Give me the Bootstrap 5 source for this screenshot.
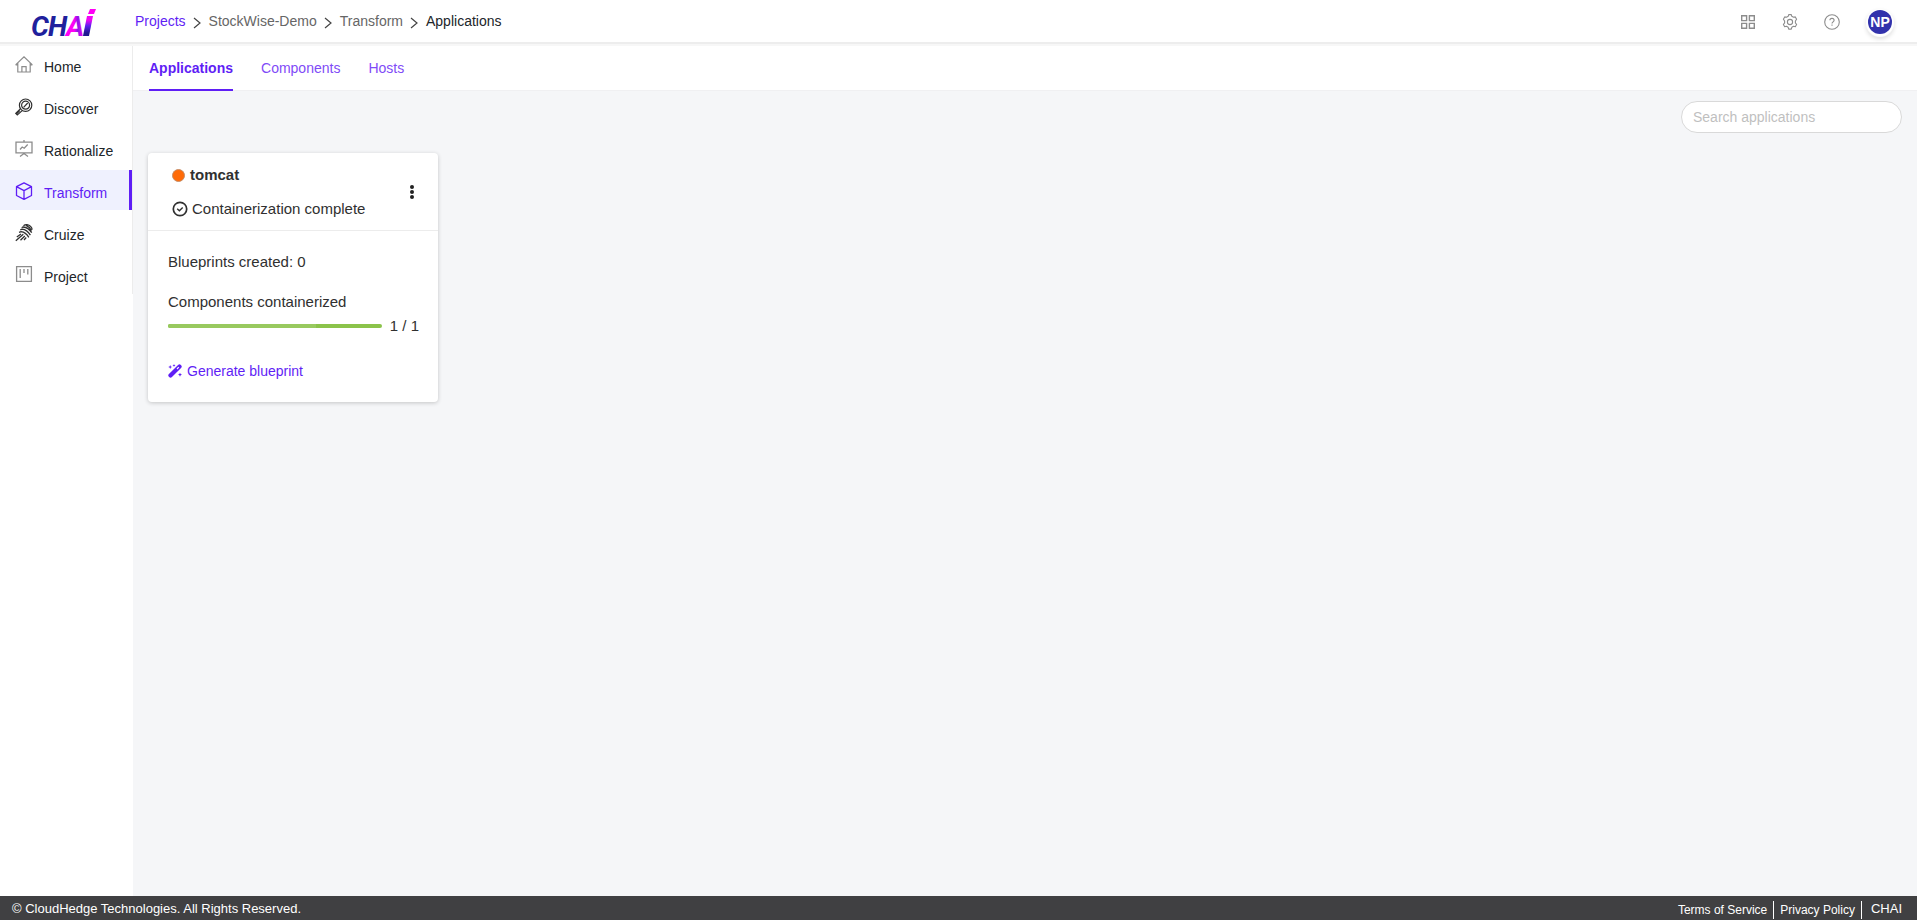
<!DOCTYPE html>
<html lang="en">
<head>
<meta charset="utf-8">
<meta name="viewport" content="width=device-width, initial-scale=1">
<title>CHAI - Applications</title>
<link rel="stylesheet" href="https://cdn.jsdelivr.net/npm/bootstrap@5.3.0/dist/css/bootstrap.min.css">
<style>
  :root { --brand: #5f1ef5; --ink: #212529; --canvas: #f5f6f8; }
  body { font-family: "Liberation Sans", Arial, sans-serif; font-size: 14px; line-height: 20px; color: var(--ink); background: #fff; }
  a { text-decoration: none; }
  svg { display: block; flex: none; }
  .topbar { height: 44px; padding-top: 2px; border-bottom: 2px solid #ededed; box-shadow: 0 2px 0 #f7f7f7; position: relative; z-index: 1; }
  .brand-area { width: 135px; padding-left: 30px; }
  .crumbs { gap: 6px; padding-bottom: 2px; font-size: 14px; }
  .crumbs a { color: #666; }
  .crumbs a.crumb-root { color: var(--brand); }
  .crumbs svg { margin-top: 4px; }
  .tool-btn { width: 42px; height: 40px; padding: 0; border: 0; background: none; color: #8c8c8c; }
  .topbar-tools { padding-right: 25px; }
  .avatar { width: 24px; height: 24px; border-radius: 50%; background: #3232ac; color: #fff; font-weight: 700; font-size: 14px; line-height: 24px; border: 0; padding: 0; margin-left: 15px; box-shadow: 0 1px 1px 2px #fff, 0 3px 4px 2px #ddd; }
  .side { width: 133px; flex: none; }
  .side-nav { border-right: 1px solid #ececec; gap: 2px; }
  .side-nav a { height: 40px; padding: 2px 0 0 15px; gap: 11px; color: var(--ink); border-right: 3px solid transparent; }
  .side-nav a span { padding-top: 4px; }
  .side-nav svg { color: #8c8c8c; }
  .side-nav svg.dark-icon { color: #303030; }
  .side-nav a.current { background: #eff1fe; color: var(--brand); border-right-color: var(--brand); }
  .side-nav a.current svg { color: var(--brand); }
  .workspace { background: var(--canvas); min-width: 0; }
  .tabs { height: 47px; padding-left: 16px; gap: 28px; background: #fff; border-bottom: 1px solid #f0f0f2; }
  .tabs a { color: #7f4bf7; padding-top: 14px; height: 47px; }
  .tabs a.current { color: var(--brand); font-weight: 700; border-bottom: 2px solid var(--brand); }
  .search-row { padding: 10px 15px 20px; }
  .search { width: 221px; height: 32px; font-size: 14px; border: 1px solid #d9d9d9; border-radius: 16px; padding: 0 11px; background: #fff; }
  .search::placeholder { color: #bfbfbf; opacity: 1; }
  .app-card { width: 290px; margin-left: 15px; border: 0; border-radius: 4px; box-shadow: 0 1px 4px rgba(0,0,0,.2); color: #303030; font-size: 15px; }
  .app-head { height: 78px; padding: 0 20px 0 24px; border-bottom: 1px solid #ececec; }
  .app-title { font-size: 15px; line-height: 20px; font-weight: 700; gap: 5px; margin-bottom: 14px; }
  .app-body { padding: 21px 19px 21px 20px; }
  .dot { width: 13px; height: 13px; border-radius: 50%; background: #ff6b08; border: 1px solid #c78d66; margin-top: 2px; }
  .meter { height: 4px; border-radius: 2px; background: #8bc34a; }
  .meter .progress-bar { background: #98c95f; }
  .menu-btn { border: 0; background: none; padding: 0; color: #222; }
  .generate { border: 0; background: none; padding: 0; margin-top: 25px; gap: 5px; color: var(--brand); font-size: 14px; }
  .page-foot { height: 24px; padding: 1px 15px 0 12px; background: #404042; color: #fff; font-size: 13px; line-height: 18px; }
  .page-foot a { color: #fff; font-size: 12px; padding: 0 6px; border-right: 1px solid #fff; margin-top: 2px; }
  .foot-brand { margin-left: 9px; }
</style>
</head>
<body class="d-flex flex-column min-vh-100">
<header class="topbar d-flex align-items-center bg-white">
  <a class="brand-area" href="#" aria-label="CHAI">
    <svg width="70" height="40" viewBox="0 0 70 40" font-family="Roboto, Liberation Sans, sans-serif" font-weight="700" font-style="italic" font-size="28">
      <defs>
        <linearGradient id="ga" x1="0" y1="0" x2="1" y2="0"><stop offset=".5" stop-color="#ff00f5"/><stop offset=".68" stop-color="#8a16e8"/><stop offset=".9" stop-color="#e808f2"/></linearGradient>
        <linearGradient id="gi" x1="0" y1="0" x2="0" y2="1"><stop offset=".2" stop-color="#f006f4"/><stop offset=".5" stop-color="#5a20ee"/><stop offset=".85" stop-color="#201890"/></linearGradient>
      </defs>
      <text x="1" y="34" fill="#20209c">C</text>
      <text x="18" y="34" fill="#20209c">H</text>
      <text x="36" y="34" fill="url(#ga)">A</text>
      <path d="M57 14h6l-4 20h-6z" fill="url(#gi)"/><path d="M60 7h6l-2 5h-6z" fill="#ff00f5"/>
    </svg>
  </a>
  <nav class="crumbs d-flex align-items-center" aria-label="breadcrumb">
    <a class="crumb-root" href="#">Projects</a>
    <svg width="11" height="12" fill="none" stroke="#444" stroke-width="1.2"><path d="M2 1l6 5-6 5"/></svg>
    <a href="#">StockWise-Demo</a>
    <svg width="11" height="12" fill="none" stroke="#444" stroke-width="1.2"><path d="M2 1l6 5-6 5"/></svg>
    <a href="#">Transform</a>
    <svg width="11" height="12" fill="none" stroke="#444" stroke-width="1.2"><path d="M2 1l6 5-6 5"/></svg>
    <span aria-current="page">Applications</span>
  </nav>
  <div class="topbar-tools d-flex align-items-center ms-auto">
    <button class="tool-btn d-flex align-items-center justify-content-center" aria-label="Apps"><svg width="14" height="14" fill="none" stroke="currentColor" stroke-width="1.4"><path d="M.7.7h4.9v4.9H.7zM8.4.7h4.9v4.9H8.4zM.7 8.4h4.9v4.9H.7zM8.4 8.4h4.9v4.9H8.4z"/></svg></button>
    <button class="tool-btn d-flex align-items-center justify-content-center" aria-label="Settings"><svg width="16" height="16" viewBox="0 0 16 16" fill="none" stroke="currentColor" stroke-width="1.1" stroke-linejoin="round"><path d="M6.2 2.3 6.7.6h2.6l.5 1.7 1.8 1 1.7-.4 1.3 2.3L13.400 7v2l1.200 1.400-1.300 2.300-1.700-.4-1.800 1-.5 1.800H6.700l-.5-1.800-1.800-1-1.700.4-1.300-2.300L2.600 9V7L1.400 5.200 2.700 2.900l1.700.4z"/><circle cx="8" cy="8" r="2.600"/></svg></button>
    <button class="tool-btn d-flex align-items-center justify-content-center" aria-label="Help"><svg width="16" height="16" viewBox="0 0 16 16" fill="none" stroke="currentColor" stroke-width="1.1"><circle cx="8" cy="8" r="7.300"/><path d="M5.900 6.300c0-2.600 4.200-2.600 4.200 0 0 1.500-2.100 1.600-2.100 3.200M8 10.500v1.300"/></svg></button>
    <button class="avatar" aria-label="Account">NP</button>
  </div>
</header>

<div class="d-flex flex-grow-1">
  <aside class="side">
    <nav class="side-nav d-flex flex-column">
      <a class="d-flex align-items-center" href="#"><svg width="18" height="18" viewBox="0 0 18 18" fill="none" stroke="currentColor" stroke-width="1.200"><path d="M.6 8.900 9 .8l8.400 8.100M2.800 7v9h12.400V7M.6 8.900h2.200M15.200 8.900h2.200M6.900 16v-5.300h4.200V16"/></svg><span>Home</span></a>
      <a class="d-flex align-items-center" href="#"><svg class="dark-icon" width="18" height="18" viewBox="0 0 18 18" fill="none" stroke="currentColor" stroke-width="1.200"><circle cx="10.600" cy="7.200" r="6.200"/><circle cx="10.600" cy="7.200" r="4"/><path d="M8.600 9.300 12.700 5M5.300 10.800.8 15.400l1.500 1.500 4.900-4.300M4.800 12.500l-3 3"/></svg><span>Discover</span></a>
      <a class="d-flex align-items-center" href="#"><svg width="18" height="18" viewBox="0 0 18 18" fill="none" stroke="currentColor" stroke-width="1.300"><path d="M1 2.200h16v10.600H1zM9 0v2.200M5 16.500l4-3 4 3M5 9.500l2.200-2.500 2 1.200 3.500-3.700"/></svg><span>Rationalize</span></a>
      <a class="current d-flex align-items-center" href="#" aria-current="page"><svg width="18" height="18" viewBox="0 0 18 18" fill="none" stroke="currentColor" stroke-width="1.300" stroke-linejoin="round"><path d="M9 .8 16.500 4.700v8.800L9 17.300 1.500 13.500V4.700zM1.500 4.700 9 8.600l7.500-3.900M9 8.600v8.700"/></svg><span>Transform</span></a>
      <a class="d-flex align-items-center" href="#"><svg class="dark-icon" width="18" height="18" viewBox="0 0 18 18" fill="none" stroke="currentColor" stroke-width="1.300"><path d="M8.500 1.800q1.500-1.300 3.500-1.100 4.500 1 5.200 5M6.700 3.700 8 3q5.500.5 8.700 5.700M5.300 5.900 7 5.200q5 .5 8.400 6M4 8.300l2-.6q4.800.6 7.800 5.700M11 1.300q4 1.700 5.500 5.200M.8 16.800l7.500-6.600M1.800 13l4.200-3M5.500 16.300l4.300-4.300M9 16l2.200-2.500"/></svg><span>Cruize</span></a>
      <a class="d-flex align-items-center" href="#"><svg width="18" height="18" viewBox="0 0 18 18" fill="none" stroke="currentColor" stroke-width="1.300"><path d="M1.600.7h14.800v14.600H1.600zM5.200 3v9M9 3v4M12.800 3v5.500"/></svg><span>Project</span></a>
    </nav>
  </aside>

  <main class="workspace flex-grow-1">
    <nav class="tabs d-flex" aria-label="Sections">
      <a class="current" href="#" aria-current="page">Applications</a>
      <a href="#">Components</a>
      <a href="#">Hosts</a>
    </nav>
    <div class="search-row d-flex justify-content-end">
      <input class="search" type="search" placeholder="Search applications" aria-label="Search applications">
    </div>
    <section class="card app-card">
      <div class="app-head d-flex align-items-center">
        <div class="flex-grow-1">
          <h2 class="app-title d-flex align-items-center"><span class="dot"></span>tomcat</h2>
          <div class="d-flex align-items-center gap-1"><svg width="16" height="16" fill="none" stroke="currentColor" stroke-width="1.700"><circle cx="8" cy="8" r="6.700"/><path d="M5.200 7.700 7.400 9.700l3.300-3.200" stroke-width="1.400"/></svg><span>Containerization complete</span></div>
        </div>
        <button class="menu-btn" aria-label="More actions"><svg width="12" height="14" fill="currentColor"><circle cx="6" cy="2" r="2"/><circle cx="6" cy="7" r="2"/><circle cx="6" cy="12" r="2"/></svg></button>
      </div>
      <div class="app-body">
        <div>Blueprints created: 0</div>
        <div class="mt-3 pt-1">Components containerized</div>
        <div class="d-flex align-items-center gap-2 mt-1">
          <div class="progress meter flex-grow-1" role="progressbar" aria-label="Components containerized"><div class="progress-bar" style="width:69%"></div></div>
          <span>1 / 1</span>
        </div>
        <button class="generate d-flex align-items-center"><svg width="14" height="14" viewBox="0 0 14 14" fill="currentColor"><path d="M.7 10.300 10.300.7q1.200-.9 2.300 0l.7.7q.9 1.200 0 2.300L3.700 13.300q-1.200.9-2.300 0l-.7-.7q-.9-1.200 0-2.300zM10.400 2.800 8.600 4.600l.8.800L11.200 3.600z" fill-rule="evenodd"/><path d="m2.200 1 .6 1.400L4.200 3l-1.400.6L2.200 5l-.6-1.400L.2 3l1.400-.6zM6 0l.4 1.100 1.100.4-1.100.4L6 3l-.4-1.100-1.100-.4 1.100-.4zM12 8.700l.6 1.400 1.400.6-1.400.6-.6 1.400-.6-1.400-1.400-.6 1.400-.6z"/></svg>Generate blueprint</button>
      </div>
    </section>
  </main>
</div>

<footer class="page-foot d-flex align-items-center">
  <span>© CloudHedge Technologies. All Rights Reserved.</span>
  <div class="d-flex align-items-center ms-auto">
    <a href="#">Terms of Service</a>
    <a href="#">Privacy Policy</a>
    <span class="foot-brand">CHAI</span>
  </div>
</footer>
<script src="https://cdn.jsdelivr.net/npm/bootstrap@5.3.0/dist/js/bootstrap.bundle.min.js"></script>
</body>
</html>
